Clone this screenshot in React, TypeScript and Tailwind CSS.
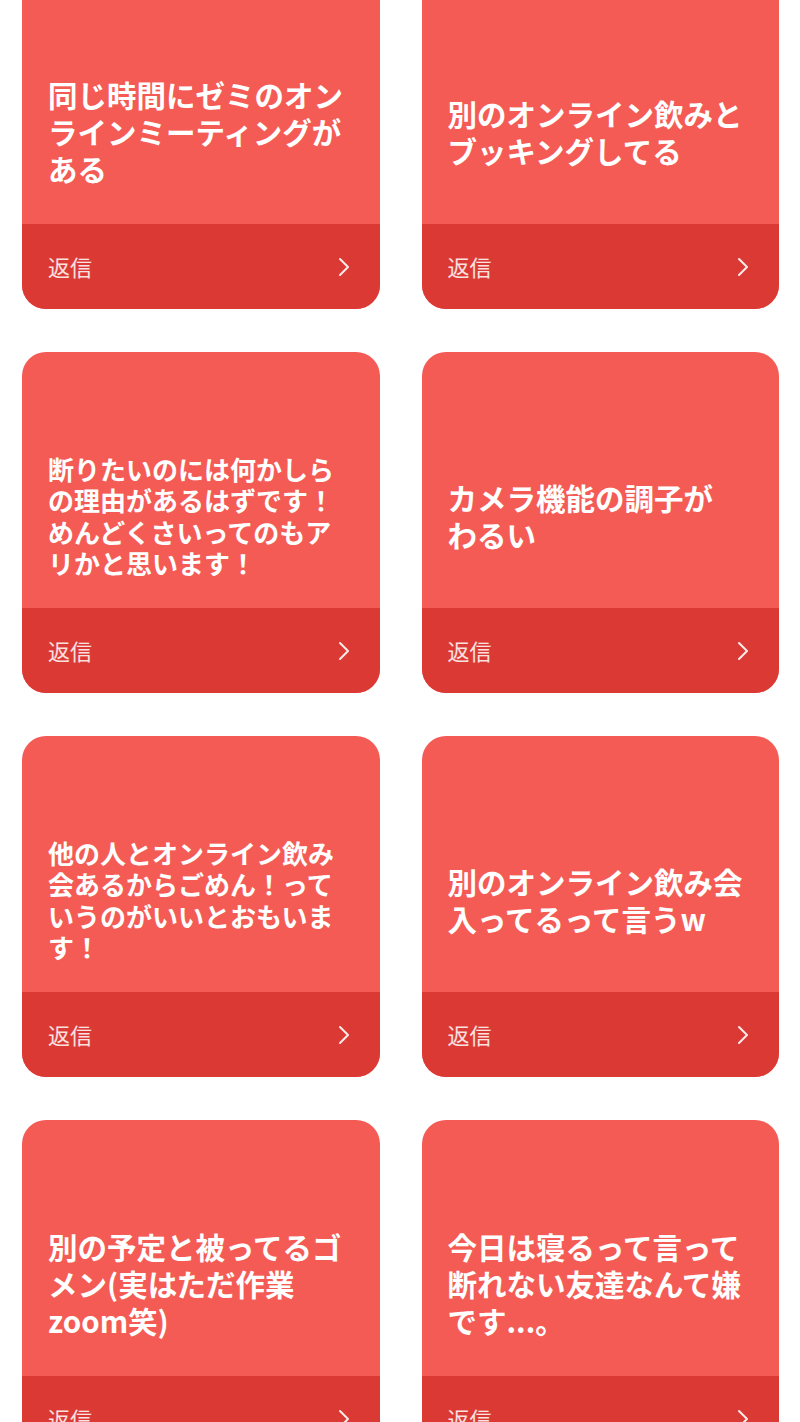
const replies = [
  "同じ時間にゼミのオンラインミーティングがある",
  "別のオンライン飲みとブッキングしてる",
  "断りたいのには何かしらの理由があるはずです！めんどくさいってのもアリかと思います！",
  "カメラ機能の調子が\nわるい",
  "他の人とオンライン飲み会あるからごめん！っていうのがいいとおもいます！",
  "別のオンライン飲み会入ってるって言うw",
  "別の予定と被ってるゴメン(実はただ作業zoom笑)",
  "今日は寝るって言って断れない友達なんて嫌です...。",
];

const Chevron = () => (
  <svg width="12" height="20" viewBox="0 0 12 20" fill="none">
    <polyline
      points="2,2 10,10 2,18"
      stroke="rgba(255,255,255,0.9)"
      strokeWidth="2"
      strokeLinecap="round"
      strokeLinejoin="round"
    />
  </svg>
);

const ReplyCard = ({ text }: { text: string }) => {
  // long answers get a smaller size so they fit in four lines
  const long = text.length > 30;

  return (
    <div className="h-[341px] rounded-[24px] overflow-hidden flex flex-col bg-[#f55b55]">
      {/* Body */}
      <div className="h-[256px] flex flex-col px-[26px]">
        <div className="h-[80px] shrink-0"></div>
        <div className="flex-1 flex items-center pb-[9px]">
          <p
            className={
              long
                ? "whitespace-pre-line text-[26px] leading-[31.5px] font-bold text-white"
                : "whitespace-pre-line text-[29.5px] leading-[37px] font-bold text-white"
            }
          >
            {text}
          </p>
        </div>
      </div>

      {/* Footer */}
      <div className="flex-1 flex items-center justify-between bg-[#db3a34] pl-[26px] pr-[30px]">
        <span className="text-[22px] text-white/85">返信</span>
        <Chevron />
      </div>
    </div>
  );
};

export default function App() {
  return (
    <div
      lang="ja"
      className="min-h-screen bg-white overflow-hidden font-['Noto_Sans_CJK_JP','Noto_Sans',sans-serif]"
    >
      <div className="-mt-[32px] grid grid-cols-2 gap-x-[42px] gap-y-[43px] pl-[22px] pr-[21px] pb-10">
        {replies.map((r, i) => (
          <ReplyCard key={i} text={r} />
        ))}
      </div>
    </div>
  );
}
